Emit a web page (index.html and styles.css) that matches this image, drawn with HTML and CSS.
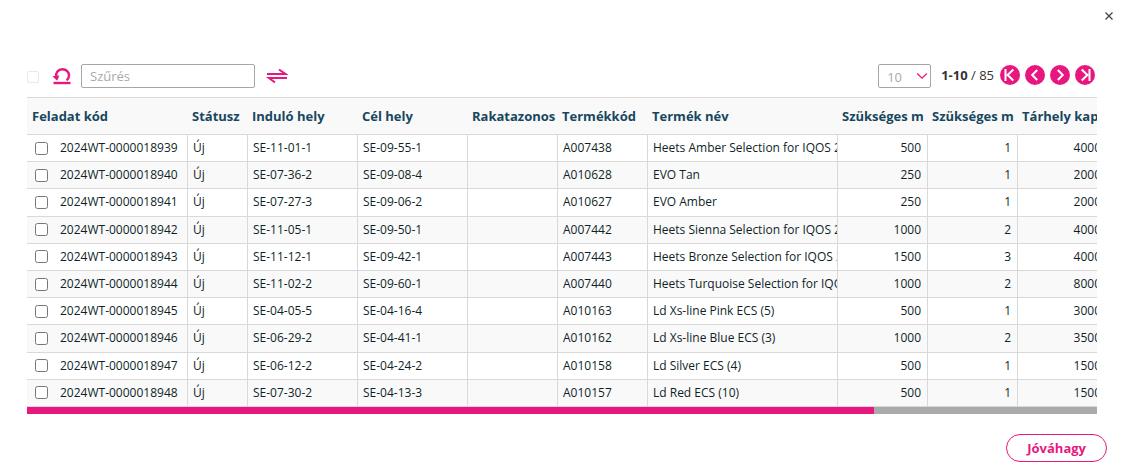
FILE: index.html
```html
<!DOCTYPE html>
<html lang="hu">
<head>
<meta charset="utf-8">
<title>Feladatok</title>
<link rel="stylesheet" href="styles.css">
</head>
<body>
<main class="dialog">
  <header class="dialog-head">
    <button class="close" type="button" aria-label="Bezárás">
      <svg width="10" height="10" viewBox="0 0 10 10"><path d="M1.5 1.5 8.500 8.500M8.500 1.500 1.500 8.500"/></svg>
    </button>
  </header>
  <div class="toolbar">
    <input class="check-all" type="checkbox" disabled aria-label="Összes kijelölése">
    <button class="icon-button reset" type="button" aria-label="Visszaállítás">
      <svg width="20" height="18" viewBox="0 0 20 18"><path class="line" d="M4.200 10C3.400 5.400 6.200 2.300 10.300 2.300s6.700 2.900 6.700 6.300c0 2-.9 3.500-2.500 4.600"/><path class="solid" d="M.4 9.200 7.400 8.400 5.200 13.800z"/><path class="line" d="M1.500 16h17"/></svg>
    </button>
    <input class="filter" type="text" placeholder="Szűrés" aria-label="Szűrés">
    <button class="icon-button swap" type="button" aria-label="Csere">
      <svg width="22" height="16" viewBox="0 0 22 16"><path class="line" d="M1 6h18.500L13 1.500M21 10H3l6 4.500"/></svg>
    </button>
    <div class="pager">
      <div class="size">
        <select class="size-select" aria-label="Sorok száma"><option>10</option><option>20</option><option>50</option></select>
        <svg class="size-arrow" width="12" height="8" viewBox="0 0 12 8"><path d="M1.200 1.500 6 6.200l4.800-4.700"/></svg>
      </div>
      <p class="range"><b>1-10</b> / 85</p>
      <div class="pages">
        <button class="page" type="button" aria-label="Első"><svg width="20" height="20" viewBox="0 0 20 20"><path d="M5.500 4v12M13.300 4.500 7.600 10l5.700 5.500"/></svg></button>
        <button class="page" type="button" aria-label="Előző"><svg width="20" height="20" viewBox="0 0 20 20"><path d="M12.200 5 7.200 10l5 5"/></svg></button>
        <button class="page" type="button" aria-label="Következő"><svg width="20" height="20" viewBox="0 0 20 20"><path d="M7.800 5l5 5-5 5"/></svg></button>
        <button class="page" type="button" aria-label="Utolsó"><svg width="20" height="20" viewBox="0 0 20 20"><path d="M14.500 4v12M6.700 4.500l5.700 5.500-5.700 5.500"/></svg></button>
      </div>
    </div>
  </div>
  <div class="table-view">
    <table class="tasks">
      <colgroup><col class="w-code"><col class="w-status"><col class="w-place"><col class="w-place"><col class="w-std"><col class="w-std"><col class="w-name"><col class="w-std"><col class="w-std"><col class="w-std"></colgroup>
      <thead>
        <tr><th>Feladat kód</th><th>Státusz</th><th>Induló hely</th><th>Cél hely</th><th>Rakatazonos</th><th>Termékkód</th><th>Termék név</th><th>Szükséges m</th><th>Szükséges m</th><th>Tárhely kap</th></tr>
      </thead>
      <tbody>
        <tr><td><label class="code"><input type="checkbox">2024WT-0000018939</label></td><td>Új</td><td>SE-11-01-1</td><td>SE-09-55-1</td><td></td><td>A007438</td><td>Heets Amber Selection for IQOS 20</td><td class="num">500</td><td class="num">1</td><td class="num">4000</td></tr>
        <tr><td><label class="code"><input type="checkbox">2024WT-0000018940</label></td><td>Új</td><td>SE-07-36-2</td><td>SE-09-08-4</td><td></td><td>A010628</td><td>EVO Tan</td><td class="num">250</td><td class="num">1</td><td class="num">2000</td></tr>
        <tr><td><label class="code"><input type="checkbox">2024WT-0000018941</label></td><td>Új</td><td>SE-07-27-3</td><td>SE-09-06-2</td><td></td><td>A010627</td><td>EVO Amber</td><td class="num">250</td><td class="num">1</td><td class="num">2000</td></tr>
        <tr><td><label class="code"><input type="checkbox">2024WT-0000018942</label></td><td>Új</td><td>SE-11-05-1</td><td>SE-09-50-1</td><td></td><td>A007442</td><td>Heets Sienna Selection for IQOS 20</td><td class="num">1000</td><td class="num">2</td><td class="num">4000</td></tr>
        <tr><td><label class="code"><input type="checkbox">2024WT-0000018943</label></td><td>Új</td><td>SE-11-12-1</td><td>SE-09-42-1</td><td></td><td>A007443</td><td>Heets Bronze Selection for IQOS 20</td><td class="num">1500</td><td class="num">3</td><td class="num">4000</td></tr>
        <tr><td><label class="code"><input type="checkbox">2024WT-0000018944</label></td><td>Új</td><td>SE-11-02-2</td><td>SE-09-60-1</td><td></td><td>A007440</td><td>Heets Turquoise Selection for IQOS</td><td class="num">1000</td><td class="num">2</td><td class="num">8000</td></tr>
        <tr><td><label class="code"><input type="checkbox">2024WT-0000018945</label></td><td>Új</td><td>SE-04-05-5</td><td>SE-04-16-4</td><td></td><td>A010163</td><td>Ld Xs-line Pink ECS (5)</td><td class="num">500</td><td class="num">1</td><td class="num">3000</td></tr>
        <tr><td><label class="code"><input type="checkbox">2024WT-0000018946</label></td><td>Új</td><td>SE-06-29-2</td><td>SE-04-41-1</td><td></td><td>A010162</td><td>Ld Xs-line Blue ECS (3)</td><td class="num">1000</td><td class="num">2</td><td class="num">3500</td></tr>
        <tr><td><label class="code"><input type="checkbox">2024WT-0000018947</label></td><td>Új</td><td>SE-06-12-2</td><td>SE-04-24-2</td><td></td><td>A010158</td><td>Ld Silver ECS (4)</td><td class="num">500</td><td class="num">1</td><td class="num">1500</td></tr>
        <tr><td><label class="code"><input type="checkbox">2024WT-0000018948</label></td><td>Új</td><td>SE-07-30-2</td><td>SE-04-13-3</td><td></td><td>A010157</td><td>Ld Red ECS (10)</td><td class="num">500</td><td class="num">1</td><td class="num">1500</td></tr>
      </tbody>
    </table>
  </div>
  <div class="scroll-track"><div class="scroll-thumb"></div></div>
  <footer class="dialog-foot"><button class="approve" type="button">Jóváhagy</button></footer>
</main>
</body>
</html>
```
FILE: styles.css
```css
* { box-sizing: border-box; }
body {
  margin: 0;
  background: #fff;
  color: #0f1f28;
  font: 12px/20px "Open Sans", "Noto Sans", sans-serif;
}
button { margin: 0; padding: 0; border: 0; background: none; cursor: pointer; }
svg { display: block; fill: none; }
.dialog { padding: 8px 25px 0 27px; }
.dialog-head { display: flex; justify-content: flex-end; height: 56px; margin-right: -20px; }
.close { display: grid; place-items: center; width: 16px; height: 16px; }
.close svg { stroke: #444; stroke-width: 1.3; }

.toolbar { display: flex; align-items: center; height: 24px; margin-bottom: 9px; }
.check-all { width: 12px; height: 12px; margin: 2px 13px 0 0; appearance: none; border: 1px solid #e8e8e8; border-radius: 2px; }
.icon-button .line { stroke: #e8177f; stroke-width: 2; }
.icon-button.reset .line { stroke-width: 2.4; }
.icon-button .solid { fill: #e8177f; }
.reset { margin-right: 9px; }
.filter {
  width: 174px; height: 24px; padding: 0 8px;
  border: 1px solid #a6a6a6; border-radius: 2px;
  font: 13px "Open Sans", "Noto Sans", sans-serif;
}
.filter::placeholder { color: #a9a9a9; opacity: 1; }
.swap { margin-left: 11px; }
.pager { display: flex; align-items: center; margin-left: auto; }
.size { display: grid; width: 53px; align-items: center; }
.size-select {
  grid-area: 1 / 1; width: 100%; height: 24px; padding: 2px 8px 0;
  appearance: none; background: #fff;
  border: 1px solid #a6a6a6; border-radius: 2px;
  color: #a9a9a9; font: 13px "Open Sans", "Noto Sans", sans-serif;
}
.size-arrow { grid-area: 1 / 1; justify-self: end; margin-right: 3px; stroke: #e8177f; stroke-width: 1.3; pointer-events: none; }
.range { margin: 0 6px 2px 10px; color: #333; font-size: 13px; }
.pages { display: flex; gap: 5px; margin: 0 2px 2px 0; }
.page { border-radius: 50%; background: #e8177f; }
.page svg { stroke: #fff; stroke-width: 2; }

.table-view { overflow: hidden; }
.tasks { width: 1080px; min-width: 100%; height: 310px; table-layout: fixed; border-collapse: separate; border-spacing: 0; }
.w-code { width: 160px; }
.w-status { width: 60px; }
.w-place { width: 110px; }
.w-std { width: 90px; }
.w-name { width: 190px; }
.tasks th, .tasks td { overflow: hidden; white-space: nowrap; text-align: left; border-bottom: 1px solid #d9d9d9; }
.tasks th {
  height: 38px; padding: 0 0 0 5px;
  border-top: 1px solid #d9d9d9; background: #f9f9f9;
  color: #17475e; font-size: 13px; font-weight: 700;
}
.tasks td { padding: 0 0 0 5px; border-left: 1px solid #d9d9d9; }
.tasks td:first-child { padding-left: 8px; border-left: 0; }
.tasks td.num { padding: 0 6px 0 0; text-align: right; }
.tasks tbody tr:nth-child(even) { background: #f9f9f9; }
.code { display: flex; align-items: center; gap: 12px; }
.code input { width: 13px; height: 13px; margin: 0; }

.scroll-track { height: 7px; background: #aaa; }
.scroll-thumb { width: 79.2%; height: 100%; background: #e8177f; }
.dialog-foot { display: flex; justify-content: flex-end; margin: 20px -10px 0 0; }
.approve {
  height: 28px; padding: 0 20px;
  border: 1px solid #e8177f; border-radius: 14px;
  color: #e8177f; font: 700 13px "Open Sans", "Noto Sans", sans-serif;
}
```
